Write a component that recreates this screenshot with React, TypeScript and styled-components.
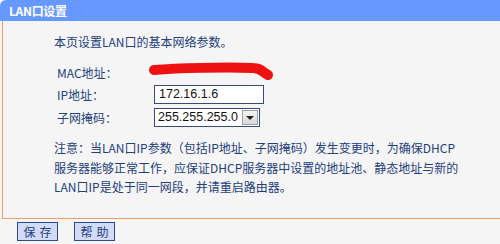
import React from 'react';
import styled, { createGlobalStyle } from 'styled-components';

const GlobalStyle = createGlobalStyle`
    html, body {
        margin: 0;
        padding: 0;
        background: #ffffff;
    }
    body {
        width: 500px;
        height: 244px;
        overflow: hidden;
        font-family: "Noto Sans CJK SC", "Liberation Sans", sans-serif;
        font-size: 12px;
    }
`;

const Page = styled.div`
    width: 500px;
    height: 244px;
    background: #f6f5f5;
    display: flex;
    flex-direction: column;
`;

const Header = styled.div`
    height: 21px;
    background: #6699ff;
    border-top-left-radius: 6px;
    display: flex;
    align-items: center;
    padding-left: 9px;
    color: #ffffff;
    font-weight: bold;
    font-size: 12px;
    letter-spacing: -0.3px;
`;

const Body = styled.div`
    margin-left: 2px;
    height: 198px;
    border-left: 1px solid #e9a062;
    border-bottom: 1px solid #e9a062;
    padding: 11px 0 0 51px;
    box-sizing: border-box;
    color: #22407c;
`;

const Intro = styled.div`
    line-height: 20px;
    height: 20px;
`;

const Form = styled.div`
    margin-top: 9px;
    display: flex;
    flex-direction: column;
`;

const Row = styled.div<{ h: number }>`
    display: flex;
    align-items: center;
    height: ${(p) => p.h}px;
`;

const Label = styled.span`
    width: 100px;
    padding-left: 3px;
    box-sizing: border-box;
    flex: none;
`;

const Scribble = styled.svg`
    display: block;
    flex: none;
    margin-left: -7px;
    margin-top: -1px;
`;

const TextBox = styled.div`
    width: 110px;
    height: 19px;
    box-sizing: border-box;
    border: 1px solid #3a4a78;
    background: #ffffff;
    color: #111111;
    font-family: "Liberation Sans", Arial, sans-serif;
    font-size: 12.5px;
    line-height: 17px;
    padding-left: 4px;
`;

const SelectBox = styled.div`
    width: 106px;
    height: 19px;
    box-sizing: border-box;
    border: 1px solid #3a4a78;
    background: #ffffff;
    color: #111111;
    font-family: "Liberation Sans", Arial, sans-serif;
    font-size: 12.5px;
    line-height: 17px;
    padding-left: 3px;
    display: flex;
    justify-content: space-between;
    align-items: center;
    white-space: nowrap;
`;

const Arrow = styled.span`
    width: 16px;
    height: 15px;
    margin-right: 1px;
    flex: none;
    box-sizing: border-box;
    border: 1px solid #9aa0a8;
    background: linear-gradient(#f4f4f4, #d8d8d8);
    display: flex;
    align-items: center;
    justify-content: center;
    &::after {
        content: '';
        border-left: 4px solid transparent;
        border-right: 4px solid transparent;
        border-top: 4px solid #222;
        margin-top: 1px;
    }
`;

const Note = styled.div`
    margin-top: 9px;
    line-height: 19.5px;
    white-space: nowrap;
`;

const Footer = styled.div`
    display: flex;
    gap: 16px;
    padding: 3px 0 0 17px;
`;

const Button = styled.button`
    width: 41px;
    height: 19px;
    padding: 0;
    border: 1px solid #2f4a8a;
    background: #d2dcf8;
    color: #22407c;
    font-family: "Noto Sans CJK SC", sans-serif;
    font-size: 12px;
    letter-spacing: 4px;
    text-indent: 4px;
    line-height: 17px;
`;

export default function App() {
    return (
        <>
            <GlobalStyle />
            <Page>
                <Header>LAN口设置</Header>
                <Body>
                    <Intro>本页设置LAN口的基本网络参数。</Intro>
                    <Form>
                        <Row h={22}>
                            <Label>MAC地址：</Label>
                            <Scribble width="128" height="20" viewBox="0 0 128 20">
                                <path
                                    d="M7 8 C 30 6, 80 5, 106 6 C 112 6, 114 8, 118 11 L 121 13"
                                    stroke="#ee1111"
                                    strokeWidth="10"
                                    strokeLinecap="round"
                                    strokeLinejoin="round"
                                    fill="none"
                                />
                            </Scribble>
                        </Row>
                        <Row h={23}>
                            <Label>IP地址：</Label>
                            <TextBox>172.16.1.6</TextBox>
                        </Row>
                        <Row h={23}>
                            <Label>子网掩码：</Label>
                            <SelectBox>
                                255.255.255.0
                                <Arrow />
                            </SelectBox>
                        </Row>
                    </Form>
                    <Note>
                        注意：当LAN口IP参数（包括IP地址、子网掩码）发生变更时，为确保DHCP
                        <br />
                        服务器能够正常工作，应保证DHCP服务器中设置的地址池、静态地址与新的
                        <br />
                        LAN口IP是处于同一网段，并请重启路由器。
                    </Note>
                </Body>
                <Footer>
                    <Button>保存</Button>
                    <Button>帮助</Button>
                </Footer>
            </Page>
        </>
    );
}
